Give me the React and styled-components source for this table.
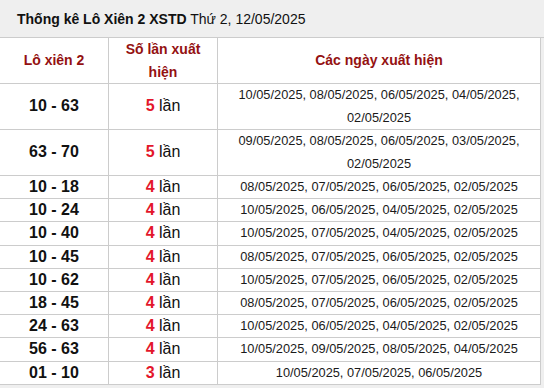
import React from "react";
import styled, { createGlobalStyle } from "styled-components";

const Global = createGlobalStyle`
  html, body { margin: 0; padding: 0; background: #efefef; }
  body { font-family: "Liberation Sans", Arial, sans-serif; overflow: hidden; }
`;

const Wrap = styled.div`
  width: 544px;
  background: #efefef;
`;

const Title = styled.div`
  height: 37px;
  padding-left: 17px;
  display: flex;
  align-items: center;
  background: #efefef;
  border-bottom: 1px solid #cccccc;
  font-size: 14px;
  color: #111;
  b { font-weight: 700; }
`;

const Table = styled.table`
  width: 542px;
  margin-left: -1px;
  border-collapse: collapse;
  table-layout: fixed;
  background: #fff;
`;

const Th = styled.th`
  border: 1px solid #cccccc;
  border-top: none;
  padding: 0;
  font-size: 14px;
  font-weight: 700;
  line-height: 22.5px;
  color: #941111;
  text-align: center;
  vertical-align: middle;
`;

const Td = styled.td`
  border: 1px solid #cccccc;
  padding: 0;
  text-align: center;
  vertical-align: middle;
  line-height: 22.2px;
  color: #111;
`;

const Pair = styled(Td)`
  font-size: 16px;
  font-weight: 700;
`;

const Count = styled(Td)`
  font-size: 16px;
  b { color: #e3162b; font-weight: 700; }
`;

const Dates = styled(Td)`
  font-size: 12.8px;
  line-height: ${(p) => (p.$multi ? "22.5px" : "22.2px")};
  color: #1a1a1a;
  padding: 0 ${(p) => (p.$multi ? "12px" : "0")};
`;

const rows = [
  ["10 - 63", 5, "10/05/2025, 08/05/2025, 06/05/2025, 04/05/2025, 02/05/2025", true],
  ["63 - 70", 5, "09/05/2025, 08/05/2025, 06/05/2025, 03/05/2025, 02/05/2025", true],
  ["10 - 18", 4, "08/05/2025, 07/05/2025, 06/05/2025, 02/05/2025"],
  ["10 - 24", 4, "10/05/2025, 06/05/2025, 04/05/2025, 02/05/2025"],
  ["10 - 40", 4, "10/05/2025, 07/05/2025, 04/05/2025, 02/05/2025"],
  ["10 - 45", 4, "08/05/2025, 07/05/2025, 06/05/2025, 02/05/2025"],
  ["10 - 62", 4, "10/05/2025, 07/05/2025, 06/05/2025, 02/05/2025"],
  ["18 - 45", 4, "08/05/2025, 07/05/2025, 06/05/2025, 02/05/2025"],
  ["24 - 63", 4, "10/05/2025, 06/05/2025, 04/05/2025, 02/05/2025"],
  ["56 - 63", 4, "10/05/2025, 09/05/2025, 08/05/2025, 04/05/2025"],
  ["01 - 10", 3, "10/05/2025, 07/05/2025, 06/05/2025"],
];

export default function App() {
  return (
    <Wrap>
      <Global />
      <Title>
        <span>
          <b>Thống kê Lô Xiên 2 XSTD</b> Thứ 2, 12/05/2025
        </span>
      </Title>
      <Table>
        <colgroup>
          <col style={{ width: 109 }} />
          <col style={{ width: 109 }} />
          <col />
        </colgroup>
        <thead>
          <tr>
            <Th>Lô xiên 2</Th>
            <Th>
              Số lần xuất
              <br />
              hiện
            </Th>
            <Th>Các ngày xuất hiện</Th>
          </tr>
        </thead>
        <tbody>
          {rows.map(([pair, n, dates, multi]) => (
            <tr key={pair}>
              <Pair>{pair}</Pair>
              <Count>
                <b>{n}</b> lần
              </Count>
              <Dates $multi={multi}>{dates}</Dates>
            </tr>
          ))}
        </tbody>
      </Table>
    </Wrap>
  );
}
